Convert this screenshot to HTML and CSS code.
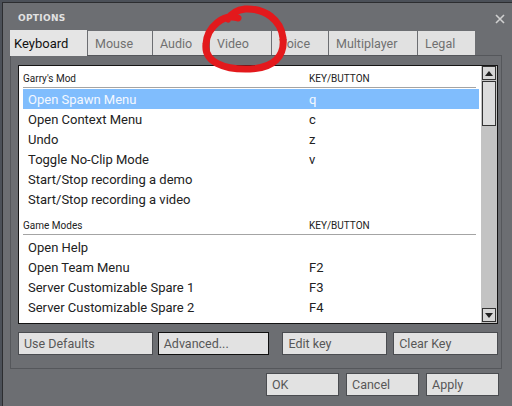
FILE: index.html
```html
<!DOCTYPE html>
<html>
<head>
<meta charset="utf-8">
<link rel="stylesheet" href="styles.css">
</head>
<body>
<div class="window">
  <div class="titlebar">
    <span class="title">OPTIONS</span>
    <svg class="close" width="10" height="10" viewBox="0 0 10 10"><path d="M1 1 L9 9 M9 1 L1 9" stroke="#d0d0d0" stroke-width="1.6"/></svg>
  </div>
  <div class="tabs">
    <div class="tab active w-kb">Keyboard</div>
    <div class="tab w-mouse">Mouse</div>
    <div class="tab w-audio">Audio</div>
    <div class="tab w-video">Video</div>
    <div class="tab w-voice">Voice</div>
    <div class="tab w-mp">Multiplayer</div>
    <div class="tab w-legal">Legal</div>
  </div>
  <div class="panel">
    <div class="list">
      <div class="content">
        <div class="sec first"><span class="name">Garry's Mod</span><span>KEY/BUTTON</span></div>
        <div class="row sel gap1"><span class="act">Open Spawn Menu</span><span>q</span></div>
        <div class="row"><span class="act">Open Context Menu</span><span>c</span></div>
        <div class="row"><span class="act">Undo</span><span>z</span></div>
        <div class="row"><span class="act">Toggle No-Clip Mode</span><span>v</span></div>
        <div class="row"><span class="act">Start/Stop recording a demo</span><span></span></div>
        <div class="row"><span class="act">Start/Stop recording a video</span><span></span></div>
        <div class="sec second"><span class="name">Game Modes</span><span>KEY/BUTTON</span></div>
        <div class="row gap2"><span class="act">Open Help</span><span></span></div>
        <div class="row"><span class="act">Open Team Menu</span><span>F2</span></div>
        <div class="row"><span class="act">Server Customizable Spare 1</span><span>F3</span></div>
        <div class="row"><span class="act">Server Customizable Spare 2</span><span>F4</span></div>
      </div>
      <div class="scrollbar">
        <div class="sbtn"><svg width="8" height="5" viewBox="0 0 8 5"><path d="M0 5 L4 0 L8 5 Z" fill="#222"/></svg></div>
        <div class="thumb"></div>
        <div class="track"></div>
        <div class="sbtn"><svg width="8" height="5" viewBox="0 0 8 5"><path d="M0 0 L8 0 L4 5 Z" fill="#222"/></svg></div>
      </div>
    </div>
    <div class="btnrow">
      <div class="btn b-def">Use Defaults</div>
      <div class="btn b-adv focus">Advanced...</div>
      <div class="btn b-edit">Edit key</div>
      <div class="btn b-clear">Clear Key</div>
    </div>
  </div>
  <div class="bottom">
    <div class="btn b-small">OK</div>
    <div class="btn b-small">Cancel</div>
    <div class="btn b-small">Apply</div>
  </div>
  <svg class="scribble" width="100" height="80" viewBox="0 0 100 80">
    <path d="M44 18 C 30 13, 13 27, 12 44 C 10 62, 30 70, 56 69 C 80 68, 91 56, 89 38 C 87 20, 71 8, 51 9 C 43 10, 37 14, 34 19" fill="none" stroke="#e3191c" stroke-width="7" stroke-linecap="round"/>
  </svg>
</div>
</body>
</html>
```
FILE: styles.css
```css
html, body {
  margin: 0;
  padding: 0;
}
body {
  width: 512px;
  height: 406px;
  overflow: hidden;
  background: #4b5058;
  font-family: Roboto, "Liberation Sans", sans-serif;
}
.window {
  position: relative;
  margin: 2px 0 0 2px;
  width: 520px;
  height: 420px;
  background: #6c6e72;
  border: 1px solid #2c2d30;
  box-sizing: border-box;
}
.titlebar {
  height: 28px;
  display: flex;
  align-items: center;
  padding-left: 15px;
  padding-top: 1px;
  box-sizing: border-box;
}
.title {
  font-family: "DejaVu Sans", sans-serif;
  font-weight: bold;
  font-size: 9px;
  color: #e2e2e2;
  letter-spacing: 0.3px;
}
.close {
  margin-left: 429px;
  margin-top: 2px;
}
.tabs {
  display: flex;
  height: 24px;
  margin-left: 7px;
  position: relative;
  z-index: 2;
}
.tab {
  height: 24px;
  box-sizing: border-box;
  background: #e1e1e1;
  color: #707070;
  font-size: 12.5px;
  padding-left: 7px;
  display: flex;
  align-items: center;
  margin-right: 1px;
}
.tab.active {
  height: 26px;
  margin-top: -1px;
  background: #e5e5e5;
  color: #111;
  padding-left: 4px;
  font-size: 13px;
}
.w-kb { width: 77px; }
.w-mouse { width: 64px; }
.w-audio { width: 56px; }
.w-video { width: 61px; }
.w-voice { width: 56px; }
.w-mp { width: 88px; }
.w-legal { width: 57px; }
.panel {
  margin-left: 7px;
  width: 492px;
  height: 314px;
  box-sizing: border-box;
  border: 1px solid #55575b;
  padding: 9px 3px 0 7px;
}
.list {
  width: 480px;
  height: 259px;
  box-sizing: border-box;
  border: 1px solid #141414;
  background: #ffffff;
  display: flex;
}
.content {
  width: 462px;
}
.sec {
  display: flex;
  align-items: flex-end;
  margin: 0 5px 0 4px;
  border-bottom: 1px solid #a4a4a4;
  font-size: 10px;
  line-height: 12px;
  padding-bottom: 2px;
  box-sizing: border-box;
  color: #222;
}
.sec.first { height: 22px; }
.sec.second { height: 26px; }
.sec .name { width: 286px; }
.row {
  display: flex;
  align-items: center;
  height: 20px;
  margin: 0 2px 0 4px;
  font-size: 13px;
  color: #222;
}
.row.gap1 { margin-top: 1px; }
.row.gap2 { margin-top: 2px; }
.row.sel {
  background: #80bdfd;
  color: #f4f8ff;
}
.act {
  width: 281px;
  padding-left: 5px;
}
.scrollbar {
  width: 16px;
  background: #c3c3c3;
  display: flex;
  flex-direction: column;
  padding: 0 1px;
  box-sizing: border-box;
}
.sbtn {
  height: 14px;
  background: #d6d6d6;
  border: 1px solid #333;
  box-sizing: border-box;
  display: flex;
  align-items: center;
  justify-content: center;
}
.scrollbar .sbtn:last-child { margin-bottom: 1px; }
.thumb {
  height: 45px;
  margin-top: 1px;
  background: #dcdcdc;
  border: 1px solid #333;
  box-sizing: border-box;
}
.track { flex: 1; }
.btnrow {
  display: flex;
  margin-top: 8px;
}
.btn {
  height: 23px;
  box-sizing: border-box;
  background: #e2e2e2;
  border: 1px solid #4a4c50;
  color: #575757;
  font-size: 12.5px;
  padding-left: 5px;
  display: flex;
  align-items: center;
}
.btn.focus { border-color: #101010; }
.b-def { width: 135px; }
.b-adv { width: 112px; margin-left: 5px; }
.b-edit { width: 105px; margin-left: 13px; }
.b-clear { width: 105px; margin-left: 6px; }
.bottom {
  display: flex;
  margin: 4px 0 0 263px;
  gap: 7px;
}
.b-small { width: 73px; }
.scribble {
  position: absolute;
  left: 191px;
  top: -3px;
  z-index: 5;
}
```
